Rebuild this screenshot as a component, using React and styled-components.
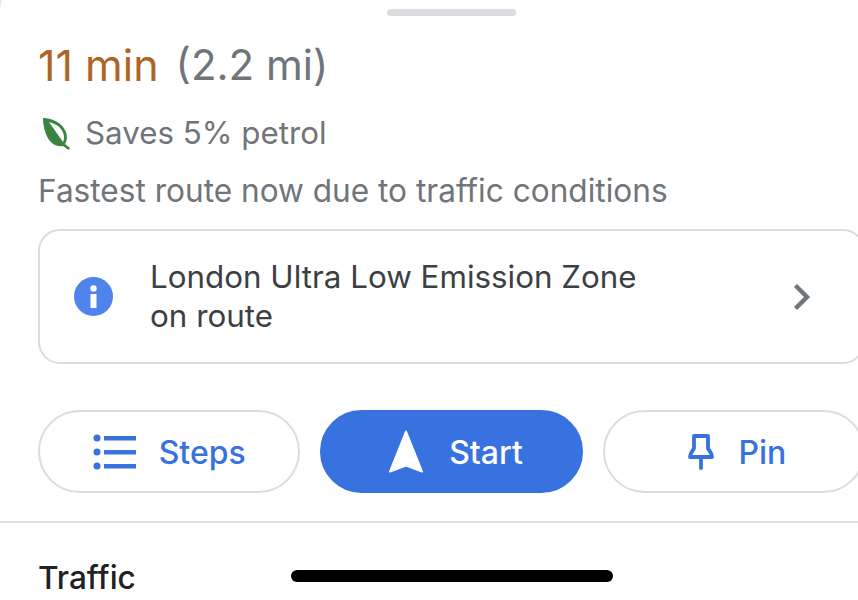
import React from 'react';
import styled, { createGlobalStyle } from 'styled-components';

const GlobalStyle = createGlobalStyle`
  html, body {
    margin: 0;
    padding: 0;
    height: 100%;
    background: #fff;
    overflow: hidden;
  }
  body {
    font-family: Inter, Roboto, "Liberation Sans", sans-serif;
  }
`;

const Viewport = styled.div`
  position: relative;
  width: 858px;
  height: 600px;
  overflow: hidden;
  background: #e6e8e8;
`;

// the sheet is wider than the screenshot, it gets cut off on the right
const Sheet = styled.div`
  position: relative;
  width: 903px;
  height: 600px;
  padding-top: 9px;
  box-sizing: border-box;
  background: #fff;
  border-top-left-radius: 3px 14px;
`;

const Handle = styled.div`
  width: 129px;
  height: 7px;
  margin: 0 auto;
  border-radius: 4px;
  background: #dadce0;
`;

const Summary = styled.div`
  padding: 24px 38px 0;
`;

const TitleRow = styled.div`
  display: flex;
  gap: 17px;
  line-height: 50px;
`;

const Duration = styled.span`
  font-size: 43px;
  color: #b06424;
`;

const Distance = styled.span`
  font-size: 42px;
  color: #70757a;
`;

const SavingsRow = styled.div`
  display: flex;
  align-items: center;
  gap: 14px;
  margin-top: 25px;
  padding-left: 4px;
  font-size: 31.3px;
  line-height: 36px;
  color: #70757a;
`;

const Note = styled.div`
  margin-top: 22px;
  font-size: 31.6px;
  line-height: 36px;
  color: #70757a;
`;

const InfoCard = styled.div`
  display: flex;
  align-items: center;
  height: 135px;
  box-sizing: border-box;
  margin: 20px 38px 0;
  padding: 0 52px 0 34px;
  border: 2px solid #dadce0;
  border-radius: 22px;
`;

const InfoText = styled.div`
  flex: 1;
  margin-left: 37px;
  font-size: 31.35px;
  line-height: 39px;
  color: #3c4043;
`;

const Buttons = styled.div`
  display: grid;
  grid-template-columns: repeat(3, 1fr);
  gap: 20px;
  margin: 46px 38px 0;
`;

const Action = styled.div`
  display: flex;
  align-items: center;
  justify-content: center;
  gap: ${(p) => p.$gap}px;
  height: 83px;
  box-sizing: border-box;
  padding-left: ${(p) => p.$shift || 0}px;
  border-radius: 42px;
  border: 2px solid ${(p) => (p.$primary ? '#3871e0' : '#dadce0')};
  background: ${(p) => (p.$primary ? '#3871e0' : '#fff')};
  color: ${(p) => (p.$primary ? '#fff' : '#3871e0')};
  font-size: 32px;
  font-weight: 500;
`;

const ActionLabel = styled.span`
  padding-top: 2px;
`;

const Divider = styled.div`
  height: 2px;
  margin-top: 28px;
  background: #dfe0e3;
`;

const SectionTitle = styled.div`
  padding: 36px 38px 0;
  font-size: 31.6px;
  line-height: 38px;
  font-weight: 500;
  color: #202124;
`;

const HomeIndicator = styled.div`
  position: absolute;
  left: 291px;
  top: 570px;
  width: 322px;
  height: 12px;
  border-radius: 6px;
  background: #000;
`;

function LeafIcon() {
  return (
    <svg width="29" height="33" viewBox="0 0 29 33">
      <path fill="#3b8340" fillRule="evenodd" d="M1 1 C9 1 19 5 23 13 C26 19 25 24 23 27 L28 31 L26.5 33 L21 29 C16 30 11 28 7 23 C3 17 1 8 1 1 Z M7 5 L21 25 C23 21 22 16 19 12 C16 8 11 6 7 5 Z" />
    </svg>
  );
}

function InfoIcon() {
  return (
    <svg width="39" height="39" viewBox="0 0 39 39">
      <circle cx="19.5" cy="19.5" r="19.5" fill="#4f84ed" />
      <circle cx="19.5" cy="11.5" r="3.2" fill="#fff" />
      <rect x="16.5" y="17" width="6" height="14" fill="#fff" />
    </svg>
  );
}

function ChevronIcon() {
  return (
    <svg width="18" height="28" viewBox="0 0 18 28">
      <path d="M2.5 2.5 L14 14 L2.5 25.5" fill="none" stroke="#70757a" strokeWidth="4.4" />
    </svg>
  );
}

function StepsIcon() {
  return (
    <svg width="43" height="36" viewBox="0 0 43 36" fill="#3871e0">
      <circle cx="4" cy="4" r="3.5" />
      <circle cx="4" cy="18" r="3.5" />
      <circle cx="4" cy="32" r="3.5" />
      <rect x="11" y="2" width="32" height="4.5" />
      <rect x="11" y="16" width="32" height="4.5" />
      <rect x="11" y="30" width="32" height="4.5" />
    </svg>
  );
}

function NavIcon() {
  return (
    <svg width="36" height="44" viewBox="0 0 36 44">
      <path fill="#fff" stroke="#fff" strokeWidth="2" strokeLinejoin="round" d="M18 1.5 L34 41.5 L18 35.5 L2 41.5 Z" />
    </svg>
  );
}

function PinIcon() {
  return (
    <svg width="26" height="36" viewBox="0 0 26 36">
      <path fill="none" stroke="#3871e0" strokeWidth="3.8" strokeLinejoin="round" strokeLinecap="round" d="M6 2 H20 V14 C20 16 24 18 24 23 H2 C2 18 6 16 6 14 Z M13 23 V34" />
    </svg>
  );
}

export default function App() {
  return (
    <Viewport>
      <GlobalStyle />
      <Sheet>
        <Handle />
        <Summary>
          <TitleRow>
            <Duration>11 min</Duration>
            <Distance>(2.2 mi)</Distance>
          </TitleRow>
          <SavingsRow>
            <LeafIcon />
            Saves 5% petrol
          </SavingsRow>
          <Note>Fastest route now due to traffic conditions</Note>
        </Summary>
        <InfoCard>
          <InfoIcon />
          <InfoText>
            London Ultra Low Emission Zone
            <br />
            on route
          </InfoText>
          <ChevronIcon />
        </InfoCard>
        <Buttons>
          <Action $gap={23}>
            <StepsIcon />
            <ActionLabel>Steps</ActionLabel>
          </Action>
          <Action $primary $gap={25} $shift={8}>
            <NavIcon />
            <ActionLabel>Start</ActionLabel>
          </Action>
          <Action $gap={24} $shift={7}>
            <PinIcon />
            <ActionLabel>Pin</ActionLabel>
          </Action>
        </Buttons>
        <Divider />
        <SectionTitle>Traffic</SectionTitle>
        <HomeIndicator />
      </Sheet>
    </Viewport>
  );
}
